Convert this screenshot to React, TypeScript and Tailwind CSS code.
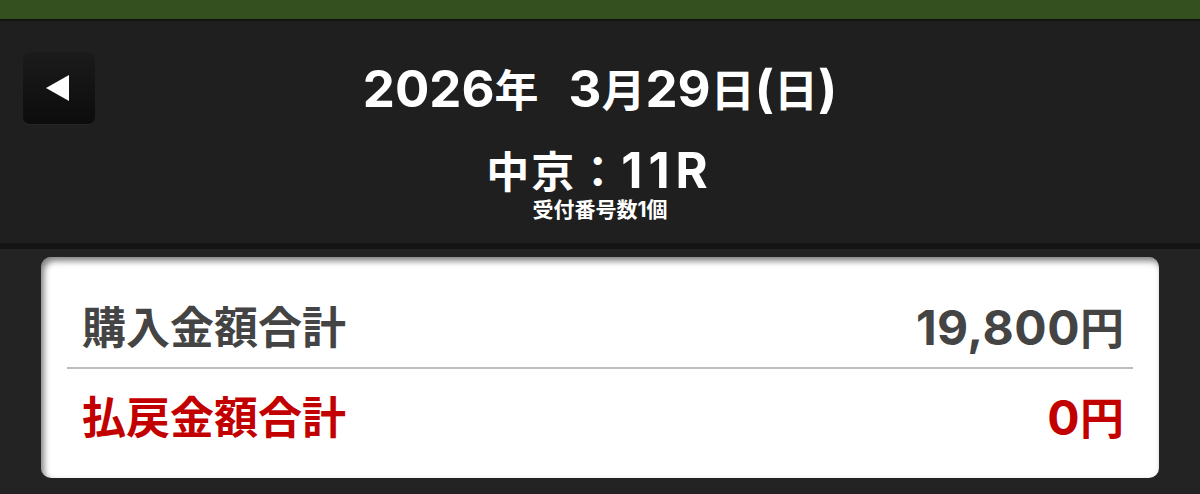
import React from "react"

const font = "font-['Inter','Noto_Sans_CJK_JP',sans-serif]"

// Latin digits are drawn a little larger than the kanji around them
const Num: React.FC<{ size: string; children: React.ReactNode }> = ({ size, children }) => (
  <span className={size}>{children}</span>
)

const BackButton: React.FC = () => (
  <button className="flex h-[72px] w-[72px] shrink-0 items-center justify-center rounded-[7px] bg-gradient-to-b from-[#1b1b1b] to-[#0c0c0c] shadow-[0_1px_1px_rgba(255,255,255,0.04)]">
    <svg width="26" height="30" viewBox="0 0 26 30" className="-ml-[2px]">
      <polygon points="1,15 24,2 24,28" fill="#ffffff" />
    </svg>
  </button>
)

const TotalRow: React.FC<{ label: string; value: string; tone: string; height: string }> = ({
  label,
  value,
  tone,
  height,
}) => (
  <div className={`flex items-center justify-between pl-[15px] pr-[9px] ${height} ${tone}`}>
    <span className="text-[44px] font-bold leading-none">{label}</span>
    <span className="flex items-baseline font-bold leading-none">
      <Num size="text-[48px] tracking-[0.5px]">{value}</Num>
      <span className="text-[44px]">円</span>
    </span>
  </div>
)

export default function App() {
  return (
    <div className={`h-[494px] w-[1200px] overflow-hidden bg-[#232323] ${font}`}>
      {/* top tint bar */}
      <div className="h-[19px] bg-[#35501f]" />
      <div className="h-[2px] bg-[#141414]" />

      {/* race header */}
      <header className="h-[222px] bg-[#1f1f1f] px-[23px] pt-[31px] text-white">
        <div className="flex h-[72px] items-center">
          <BackButton />
          <div className="flex flex-1 items-baseline justify-center font-bold leading-none">
            <Num size="text-[51px]">2026</Num>
            <span className="text-[44px]">年</span>
            <span className="ml-[30px]" />
            <Num size="text-[51px]">3</Num>
            <span className="text-[44px]">月</span>
            <Num size="text-[51px]">29</Num>
            <span className="text-[44px]">日</span>
            <Num size="text-[51px]">(</Num>
            <span className="text-[44px]">日</span>
            <Num size="text-[51px]">)</Num>
          </div>
          <div className="w-[72px] shrink-0" />
        </div>
        <div className="mt-[22px] flex h-[48px] items-center justify-center">
          <span className="flex items-baseline font-bold leading-none">
            <span className="text-[43px] tracking-[2px]">中京：</span>
            <Num size="text-[49px] tracking-[6px]">11R</Num>
          </span>
        </div>
        <div className="mt-[4px] text-center text-[21px] font-bold leading-[24px]">受付番号数1個</div>
      </header>
      <div className="h-[6px] bg-[#141414]" />

      {/* totals card */}
      <div className="px-[41px] pt-[8px]">
        <div className="rounded-[10px] bg-white px-[26px] pb-[11px] pt-[32px] shadow-[inset_3px_4px_6px_rgba(0,0,0,0.5)]">
          <TotalRow label="購入金額合計" value="19,800" tone="text-[#444444]" height="h-[78px]" />
          <div className="h-[2px] bg-[#bdbdbd]" />
          <TotalRow label="払戻金額合計" value="0" tone="text-[#c20000]" height="h-[98px]" />
        </div>
      </div>
    </div>
  )
}
